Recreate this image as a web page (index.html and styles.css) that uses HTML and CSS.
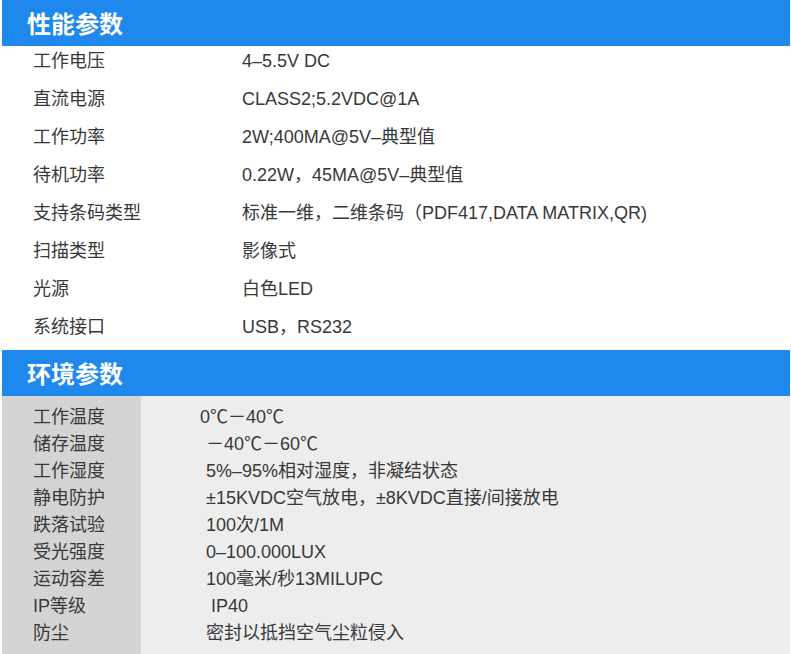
FILE: index.html
```html
<!DOCTYPE html>
<html lang="zh-CN">
<head>
  <meta charset="UTF-8" />
  <meta name="viewport" content="width=device-width, initial-scale=1.0"/>
  <title>性能参数</title>
  <link rel="stylesheet" href="styles.css">
</head>
<body>

<div class="spec">
  <h2 class="bar">性能参数</h2>
  <div class="perf">
    <div class="row"><span class="key">工作电压</span><span class="val">4–5.5V DC</span></div>
    <div class="row"><span class="key">直流电源</span><span class="val">CLASS2;5.2VDC@1A</span></div>
    <div class="row"><span class="key">工作功率</span><span class="val">2W;400MA@5V–典型值</span></div>
    <div class="row"><span class="key">待机功率</span><span class="val">0.22W，45MA@5V–典型值</span></div>
    <div class="row"><span class="key">支持条码类型</span><span class="val">标准一维，二维条码（PDF417,DATA MATRIX,QR)</span></div>
    <div class="row"><span class="key">扫描类型</span><span class="val">影像式</span></div>
    <div class="row"><span class="key">光源</span><span class="val">白色LED</span></div>
    <div class="row"><span class="key">系统接口</span><span class="val">USB，RS232</span></div>
  </div>

  <h2 class="bar">环境参数</h2>
  <div class="env">
    <div class="keys">
      <div>工作温度</div>
      <div>储存温度</div>
      <div>工作湿度</div>
      <div>静电防护</div>
      <div>跌落试验</div>
      <div>受光强度</div>
      <div>运动容差</div>
      <div>IP等级</div>
      <div>防尘</div>
    </div>
    <div class="vals">
      <div class="tight">0℃－40℃</div>
      <div>－40℃－60℃</div>
      <div>5%–95%相对湿度，非凝结状态</div>
      <div>±15KVDC空气放电，±8KVDC直接/间接放电</div>
      <div>100次/1M</div>
      <div>0–100.000LUX</div>
      <div>100毫米/秒13MILUPC</div>
      <div>&nbsp;IP40</div>
      <div>密封以抵挡空气尘粒侵入</div>
    </div>
  </div>
</div>

</body>
</html>
```

FILE: styles.css
```css
* { box-sizing: border-box; }
body {
  margin: 0;
  font-family: 'Liberation Sans', 'Noto Sans CJK SC', sans-serif;
  background: #fff;
  color: #383838;
  overflow: hidden;
}
.spec {
  width: 788px;
  margin-left: 2px;
}
.bar {
  margin: 0;
  height: 46px;
  line-height: 46px;
  padding-left: 25px;
  background: #1f88ec;
  color: #fff;
  font-family: 'Noto Sans CJK SC', sans-serif;
  font-size: 24px;
  font-weight: bold;
}
.perf {
  font-size: 18px;
}
.row {
  display: flex;
  height: 38px;
  line-height: 30px;
}
.key {
  width: 240px;
  padding-left: 31px;
}
.env {
  display: flex;
  font-size: 18px;
  line-height: 27px;
  height: 260px;
}
.keys {
  width: 139px;
  background: #d4d4d4;
  padding: 8px 0 0 31px;
}
.vals {
  flex: 1;
  background: #ededed;
  padding: 8px 0 0 65px;
}
.vals .tight { margin-left: -6px; }
```
